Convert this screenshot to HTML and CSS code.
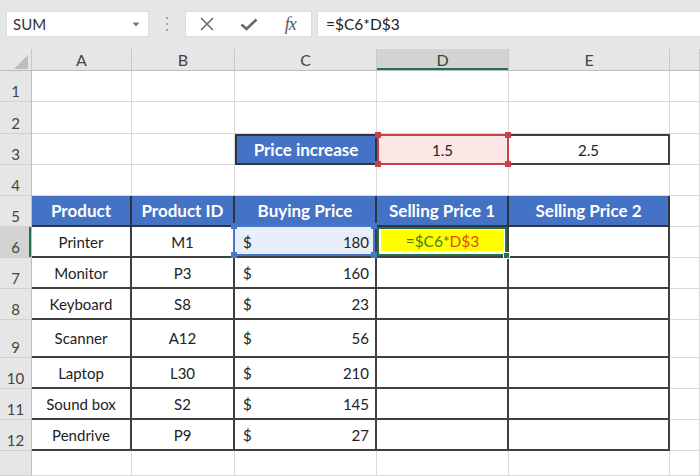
FILE: index.html
```html
<!DOCTYPE html>
<html>
<head>
<meta charset="utf-8">
<link rel="stylesheet" href="styles.css">
</head>
<body>
<div class="toolbar">
  <div class="namebox">
    <span>SUM</span>
    <svg class="caret" width="8" height="5" viewBox="0 0 8 5"><path d="M0.5 0.5 L7.5 0.5 L4 4.5 Z" fill="#7a7a7a"/></svg>
  </div>
  <div class="dots">
    <svg width="3" height="14" viewBox="0 0 3 14"><rect x="0" y="0" width="2" height="2" fill="#a8a8a8"/><rect x="0" y="6" width="2" height="2" fill="#a8a8a8"/><rect x="0" y="12" width="2" height="2" fill="#a8a8a8"/></svg>
  </div>
  <div class="fbuttons">
    <div class="fbtn"><svg width="16" height="14" viewBox="0 0 16 14"><path d="M2 1 L14 13 M14 1 L2 13" stroke="#6a6a6a" stroke-width="1.6" fill="none"/></svg></div>
    <div class="fbtn"><svg width="18" height="13" viewBox="0 0 18 13"><path d="M1.5 6.5 L6.5 11 L16.5 1.5" stroke="#6a6a6a" stroke-width="2.6" fill="none"/></svg></div>
    <div class="fbtn"><span class="fx">fx</span></div>
  </div>
  <div class="finput">=$C6*D$3</div>
</div>
<div class="sheet">
  <!-- column headers -->
  <div class="c ch corner"><svg width="14" height="14" viewBox="0 0 14 14"><path d="M14 0 L14 14 L0 14 Z" fill="#bdbdbd"/></svg></div>
  <div class="c ch">A</div>
  <div class="c ch">B</div>
  <div class="c ch">C</div>
  <div class="c ch chsel">D</div>
  <div class="c ch">E</div>
  <div class="c ch"></div>

  <!-- row 1 -->
  <div class="c rh">1</div><div class="c"></div><div class="c"></div><div class="c"></div><div class="c"></div><div class="c"></div><div class="c"></div>
  <!-- row 2 -->
  <div class="c rh">2</div><div class="c"></div><div class="c"></div><div class="c"></div><div class="c"></div><div class="c"></div><div class="c"></div>
  <!-- row 3 -->
  <div class="c rh">3</div><div class="c"></div><div class="c"></div>
  <div class="c pi">Price increase</div>
  <div class="c d3">1.5<span class="ref red"><i class="k tl"></i><i class="k tr"></i><i class="k bl"></i><i class="k br"></i></span></div>
  <div class="c e3">2.5</div>
  <div class="c"></div>
  <!-- row 4 -->
  <div class="c rh">4</div><div class="c"></div><div class="c"></div><div class="c"></div><div class="c"></div><div class="c"></div><div class="c"></div>
  <!-- row 5 -->
  <div class="c rh">5</div>
  <div class="c hd">Product</div>
  <div class="c hd">Product ID</div>
  <div class="c hd">Buying Price</div>
  <div class="c hd">Selling Price 1</div>
  <div class="c hd">Selling Price 2</div>
  <div class="c"></div>
  <!-- row 6 -->
  <div class="c rh rhsel">6</div>
  <div class="c t">Printer</div>
  <div class="c t">M1</div>
  <div class="c t money c6"><span>$</span><span>180</span><span class="ref blue"><i class="k tl"></i><i class="k tr"></i><i class="k bl"></i><i class="k br"></i></span></div>
  <div class="c t d6"><div class="yel"><span class="fg">=$C6*</span><span class="fr">D$3</span></div><span class="active"><i class="fill"></i></span></div>
  <div class="c t"></div>
  <div class="c"></div>
  <!-- row 7 -->
  <div class="c rh">7</div>
  <div class="c t">Monitor</div>
  <div class="c t">P3</div>
  <div class="c t money"><span>$</span><span>160</span></div>
  <div class="c t"></div><div class="c t"></div><div class="c"></div>
  <!-- row 8 -->
  <div class="c rh">8</div>
  <div class="c t">Keyboard</div>
  <div class="c t">S8</div>
  <div class="c t money"><span>$</span><span>23</span></div>
  <div class="c t"></div><div class="c t"></div><div class="c"></div>
  <!-- row 9 -->
  <div class="c rh">9</div>
  <div class="c t">Scanner</div>
  <div class="c t">A12</div>
  <div class="c t money"><span>$</span><span>56</span></div>
  <div class="c t"></div><div class="c t"></div><div class="c"></div>
  <!-- row 10 -->
  <div class="c rh">10</div>
  <div class="c t">Laptop</div>
  <div class="c t">L30</div>
  <div class="c t money"><span>$</span><span>210</span></div>
  <div class="c t"></div><div class="c t"></div><div class="c"></div>
  <!-- row 11 -->
  <div class="c rh">11</div>
  <div class="c t">Sound box</div>
  <div class="c t">S2</div>
  <div class="c t money"><span>$</span><span>145</span></div>
  <div class="c t"></div><div class="c t"></div><div class="c"></div>
  <!-- row 12 -->
  <div class="c rh">12</div>
  <div class="c t">Pendrive</div>
  <div class="c t">P9</div>
  <div class="c t money"><span>$</span><span>27</span></div>
  <div class="c t"></div><div class="c t"></div><div class="c"></div>
  <!-- row 13 -->
  <div class="c rh"></div><div class="c"></div><div class="c"></div><div class="c"></div><div class="c"></div><div class="c"></div><div class="c"></div>
</div>
</body>
</html>
```
FILE: styles.css
```css
html, body {
  margin: 0;
  padding: 0;
}
body {
  width: 700px;
  height: 476px;
  overflow: hidden;
  background: #e6e6e6;
  font-family: Lato, "Open Sans", "Liberation Sans", sans-serif;
  color: #222;
}

/* formula bar */
.toolbar {
  height: 49px;
  box-sizing: border-box;
  padding: 11px 0 0 6px;
  display: flex;
  align-items: flex-start;
  background: #e6e6e6;
}
.namebox {
  width: 143px;
  height: 26px;
  box-sizing: border-box;
  background: #fff;
  border: 1px solid #dcdcdc;
  display: flex;
  align-items: center;
  justify-content: space-between;
  padding: 0 8px 0 6px;
  font-size: 15px;
  color: #333;
}
.caret {
  display: block;
}
.dots {
  width: 36px;
  height: 26px;
  display: flex;
  align-items: center;
  justify-content: center;
}
.dots svg {
  display: block;
}
.fbuttons {
  width: 127px;
  height: 26px;
  box-sizing: border-box;
  background: #fff;
  border: 1px solid #dcdcdc;
  display: flex;
  align-items: center;
}
.fbtn {
  width: 42px;
  height: 24px;
  display: flex;
  align-items: center;
  justify-content: center;
}
.fbtn svg {
  display: block;
}
.fx {
  font-family: "Liberation Serif", "DejaVu Serif", serif;
  font-style: italic;
  font-size: 18px;
  color: #5a5a5a;
  letter-spacing: -1px;
}
.finput {
  flex: 1;
  margin-left: 5px;
  height: 26px;
  box-sizing: border-box;
  background: #fff;
  border: 1px solid #dcdcdc;
  border-right: none;
  display: flex;
  align-items: center;
  padding-left: 8px;
  font-size: 15.5px;
  color: #222;
}

/* sheet grid */
.sheet {
  display: grid;
  grid-template-columns: 32px 100px 103px 142px 132px 161px 1fr;
  grid-template-rows: 22px 31px 32px 31px 31px 31px 31px 31px 31px 38px 31px 31px 31px 1fr;
  height: 427px;
  background: #fff;
}
.c {
  box-sizing: border-box;
  min-width: 0;
  border-right: 1px solid #dadada;
  border-bottom: 1px solid #dadada;
  display: flex;
  align-items: center;
  justify-content: center;
  font-size: 15px;
  color: #222;
  white-space: nowrap;
}
.ch {
  background: #e6e6e6;
  border-right: 1px solid #c8c8c8;
  border-bottom: 1px solid #bdbdbd;
  font-size: 16px;
  color: #444;
}
.corner {
  justify-content: flex-end;
  align-items: flex-end;
  padding: 0 3px 1px 0;
}
.corner svg {
  display: block;
}
.chsel {
  background: #d3d3d3;
  box-shadow: inset 0 -2px 0 #217346;
  color: #2f4a3c;
}
.rh {
  background: #e6e6e6;
  border-right: 1px solid #bdbdbd;
  border-bottom: 1px solid #d0d0d0;
  align-items: flex-end;
  padding-bottom: 1px;
  line-height: 18px;
  font-size: 15px;
  color: #444;
}
.rhsel {
  background: #d3d3d3;
  box-shadow: inset -2px 0 0 #217346;
  color: #2f4a3c;
}

/* table */
.hd {
  background: #4472c4;
  color: #fff;
  font-weight: 700;
  font-size: 17px;
  border-right: 2px solid #2f3441;
  border-bottom: 2px solid #2f3441;
}
.t {
  border-right: 2px solid #404040;
  border-bottom: 2px solid #404040;
}
.money {
  justify-content: space-between;
  padding: 0 6px 0 8px;
}
.pi {
  background: #4472c4;
  color: #fff;
  font-weight: 700;
  font-size: 17px;
  border: 2px solid #2f3441;
}
.d3 {
  position: relative;
  background: #fce6e6;
  border-bottom: none;
}
.e3 {
  border-top: 2px solid #404040;
  border-right: 2px solid #404040;
  border-bottom: 2px solid #404040;
}

/* reference highlights */
.ref {
  position: absolute;
  box-sizing: border-box;
  border: 2px solid;
  pointer-events: none;
}
.red {
  top: 0;
  left: 0;
  right: -1px;
  bottom: 0;
  border-color: #c4434a;
}
.red .k {
  background: #c4434a;
}
.c6 {
  position: relative;
  background: #e9eff9;
}
.blue {
  top: -2px;
  left: -2px;
  right: 0;
  bottom: 0;
  border-color: #4a78c8;
}
.blue .k {
  background: #4a78c8;
}
.k {
  position: absolute;
  width: 6px;
  height: 6px;
}
.tl { top: -4px; left: -4px; }
.tr { top: -4px; right: -4px; }
.bl { bottom: -4px; left: -4px; }
.br { bottom: -4px; right: -4px; }

.d6 {
  position: relative;
  padding: 3px 3px 5px 4px;
  align-items: stretch;
}
.yel {
  flex: 1;
  background: #ffff00;
  display: flex;
  align-items: center;
  justify-content: center;
  font-size: 15.5px;
}
.fg {
  color: #4f7c12;
}
.fr {
  color: #e2461a;
}
.active {
  position: absolute;
  top: 0;
  left: 0;
  right: 0;
  bottom: 0;
  border: 2px solid #217346;
  pointer-events: none;
}
.fill {
  position: absolute;
  right: -5px;
  bottom: -5px;
  width: 5px;
  height: 5px;
  background: #217346;
  border: 1px solid #fff;
}
```
